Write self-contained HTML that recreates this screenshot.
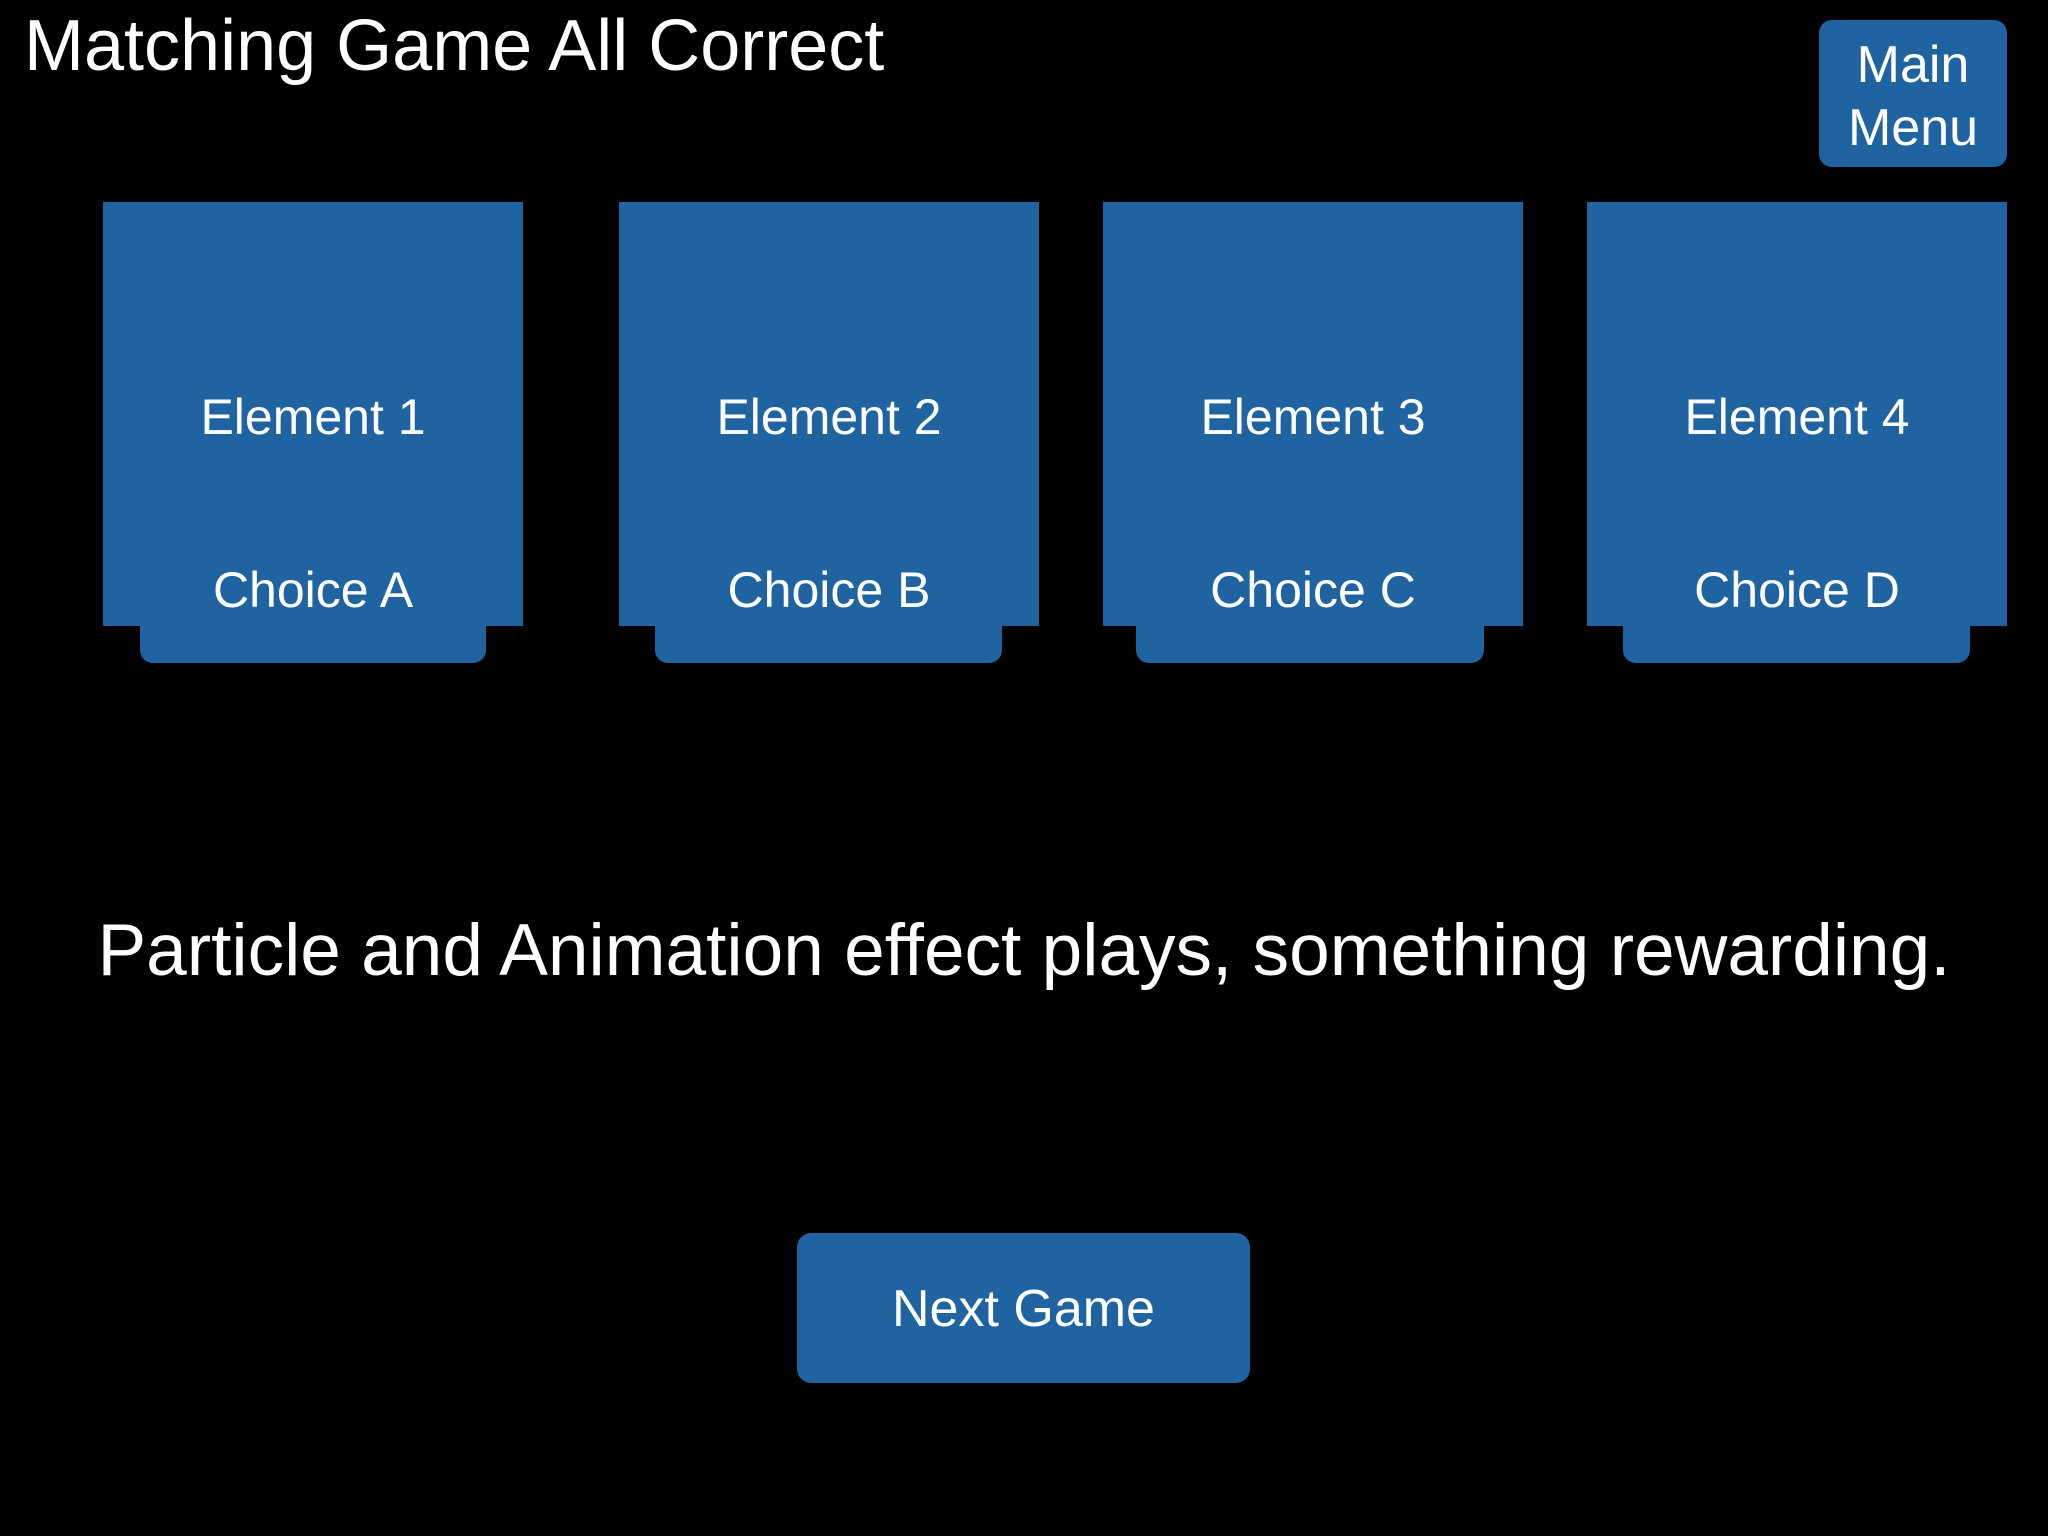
<!DOCTYPE html>
<html><head><meta charset="utf-8"><style>
html,body{margin:0;padding:0;background:#000;}
body{width:2048px;height:1536px;position:relative;overflow:hidden;font-family:"Liberation Sans",sans-serif;color:#fff;}
.b{position:absolute;background:#1f64a0;}
.t{position:absolute;white-space:nowrap;text-align:center;line-height:1;}
</style></head><body>
<div class="t" style="left:24px;top:10px;font-size:72px;text-align:left;">Matching Game All Correct</div>
<div class="b" style="left:1819px;top:20px;width:188px;height:147px;border-radius:13px;"></div>
<div class="t" style="left:1819px;width:188px;top:34px;font-size:52px;line-height:63px;">Main<br>Menu</div>

<div class="b" style="left:103px;top:202px;width:420px;height:424px;"></div>
<div class="b" style="left:140px;top:620px;width:346px;height:43px;border-radius:0 0 13px 13px;"></div>
<div class="b" style="left:619px;top:202px;width:420px;height:424px;"></div>
<div class="b" style="left:655px;top:620px;width:347px;height:43px;border-radius:0 0 13px 13px;"></div>
<div class="b" style="left:1103px;top:202px;width:420px;height:424px;"></div>
<div class="b" style="left:1136px;top:620px;width:348px;height:43px;border-radius:0 0 13px 13px;"></div>
<div class="b" style="left:1587px;top:202px;width:420px;height:424px;"></div>
<div class="b" style="left:1623px;top:620px;width:347px;height:43px;border-radius:0 0 13px 13px;"></div>

<div class="t" style="left:103px;width:420px;top:392px;font-size:50px;">Element 1</div>
<div class="t" style="left:619px;width:420px;top:392px;font-size:50px;">Element 2</div>
<div class="t" style="left:1103px;width:420px;top:392px;font-size:50px;">Element 3</div>
<div class="t" style="left:1587px;width:420px;top:392px;font-size:50px;">Element 4</div>
<div class="t" style="left:103px;width:420px;top:565px;font-size:50px;">Choice A</div>
<div class="t" style="left:619px;width:420px;top:565px;font-size:50px;">Choice B</div>
<div class="t" style="left:1103px;width:420px;top:565px;font-size:50px;">Choice C</div>
<div class="t" style="left:1587px;width:420px;top:565px;font-size:50px;">Choice D</div>

<div class="t" style="left:0;width:2048px;top:914px;font-size:73px;">Particle and Animation effect plays, something rewarding.</div>

<div class="b" style="left:797px;top:1233px;width:453px;height:150px;border-radius:14px;"></div>
<div class="t" style="left:797px;width:453px;top:1283px;font-size:52px;">Next Game</div>
</body></html>
